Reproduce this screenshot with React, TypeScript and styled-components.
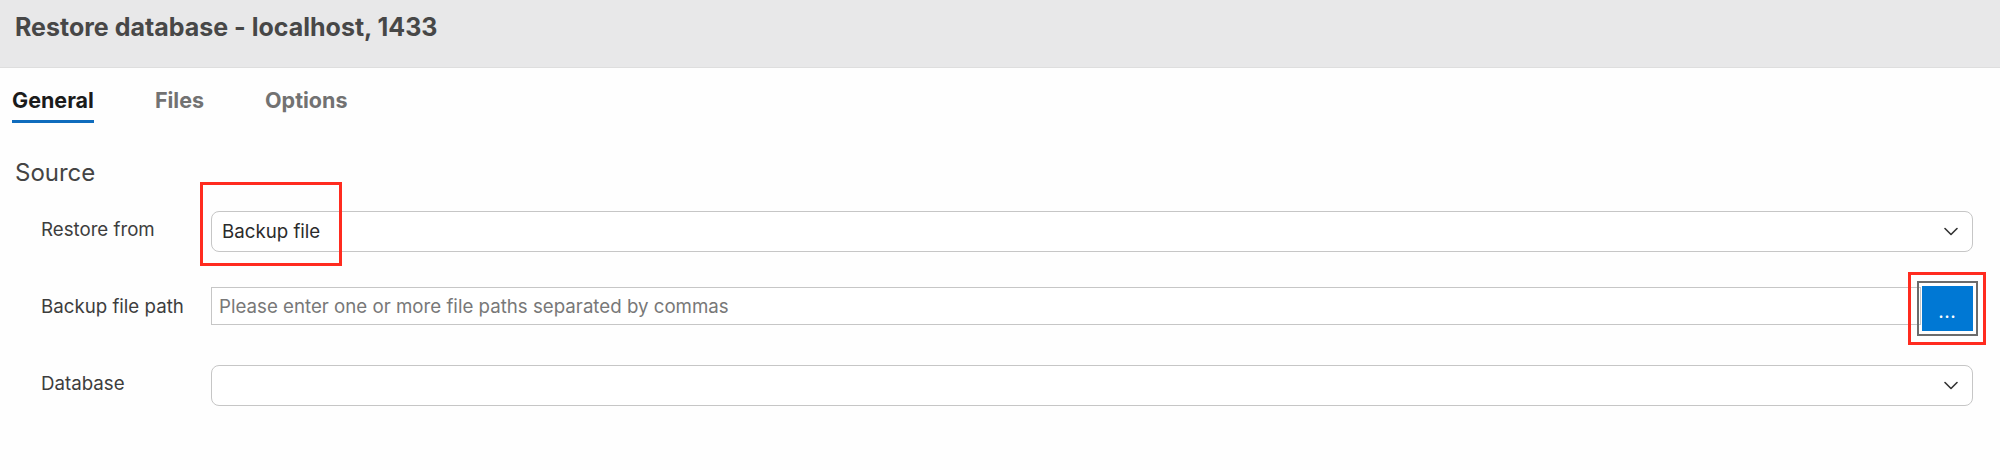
import styled, { createGlobalStyle } from 'styled-components'

const GlobalStyle = createGlobalStyle`
  html, body {
    margin: 0;
    padding: 0;
    background: #fefefe;
  }
  body {
    font-family: Inter, "Noto Sans", "Liberation Sans", sans-serif;
    color: #3b3b3b;
  }
`

const Page = styled.div`
  width: 2000px;
  height: 470px;
  overflow: hidden;
  background: #fefefe;
`

const Header = styled.header`
  height: 68px;
  background: #e8e8e9;
  border-bottom: 1px solid #dedede;
  padding: 12px 0 0 15px;
  box-sizing: border-box;

  h1 {
    margin: 0;
    font-size: 25px;
    font-weight: 700;
    color: #474747;
  }
`

const TabBar = styled.nav`
  display: flex;
  gap: 61px;
  padding: 19px 0 0 12px;
`

const Tab = styled.div<{ $active?: boolean }>`
  font-size: 21.5px;
  font-weight: 700;
  line-height: 26px;
  color: ${({ $active }) => ($active ? '#1b1b1b' : '#727272')};
  padding-bottom: 7px;
  border-bottom: 3px solid ${({ $active }) => ($active ? '#0f6cbd' : 'transparent')};
`

const SectionTitle = styled.h2`
  margin: 35px 0 0 15px;
  font-size: 24px;
  line-height: 29px;
  font-weight: 400;
  color: #444;
`

const Form = styled.div`
  display: flex;
  flex-direction: column;
  gap: 34px;
  margin-top: 24px;
  padding: 0 27px 0 41px;
`

const Row = styled.div`
  display: grid;
  grid-template-columns: 170px 1fr;
  align-items: center;
`

const Label = styled.label`
  font-size: 18.7px;
  color: #3d3d3d;
  padding-bottom: 4px;
`

const Annotated = styled.div`
  position: relative;
`

const Marker = styled.div<{ $l: number; $t: number; $w: number; $h: number }>`
  position: absolute;
  left: ${({ $l }) => $l}px;
  top: ${({ $t }) => $t}px;
  width: ${({ $w }) => $w}px;
  height: ${({ $h }) => $h}px;
  border: 3px solid #ff2b1f;
  box-sizing: border-box;
  pointer-events: none;
`

const Select = styled.div`
  height: 41px;
  border: 1px solid #c6c6c6;
  border-radius: 8px;
  box-sizing: border-box;
  display: flex;
  align-items: center;
  justify-content: space-between;
  padding: 0 14px 0 10px;
  font-size: 18.7px;
  color: #2b2b2b;
  background: #fff;
`

const PathGroup = styled.div`
  display: flex;
  align-items: flex-start;
`

const Input = styled.div`
  flex: 1;
  height: 38px;
  margin-top: 1px;
  border: 1px solid #c6c6c6;
  box-sizing: border-box;
  display: flex;
  align-items: center;
  padding-left: 7px;
  font-size: 18.7px;
  color: #787878;
  background: #fff;
`

const BrowseButton = styled.button`
  display: block;
  width: 51px;
  height: 45px;
  margin-left: 1px;
  border: none;
  background: #0078d4;
  color: #fff;
  font-family: inherit;
  font-size: 15px;
  font-weight: 700;
  letter-spacing: 1px;
  padding: 8px 0 0;
  outline: 2px solid #6b6b6b;
  outline-offset: 3px;
`

const Chevron = () => (
  <svg width="14" height="9" viewBox="0 0 14 9" fill="none">
    <path d="M1 1.5 L7 7.5 L13 1.5" stroke="#333" strokeWidth="1.6" strokeLinecap="round" strokeLinejoin="round" />
  </svg>
)

export default function App() {
  return (
    <Page>
      <GlobalStyle />
      <Header>
        <h1>Restore database - localhost, 1433</h1>
      </Header>
      <TabBar>
        <Tab $active>General</Tab>
        <Tab>Files</Tab>
        <Tab>Options</Tab>
      </TabBar>
      <SectionTitle>Source</SectionTitle>
      <Form>
        <Row>
          <Label>Restore from</Label>
          <Annotated>
            <Select>
              <span>Backup file</span>
              <Chevron />
            </Select>
            <Marker $l={-11} $t={-29} $w={142} $h={84} />
          </Annotated>
        </Row>
        <Row>
          <Label>Backup file path</Label>
          <PathGroup>
            <Input>Please enter one or more file paths separated by commas</Input>
            <Annotated>
              <BrowseButton>...</BrowseButton>
              <Marker $l={-13} $t={-14} $w={78} $h={73} />
            </Annotated>
          </PathGroup>
        </Row>
        <Row>
          <Label>Database</Label>
          <Select>
            <span />
            <Chevron />
          </Select>
        </Row>
      </Form>
    </Page>
  )
}
